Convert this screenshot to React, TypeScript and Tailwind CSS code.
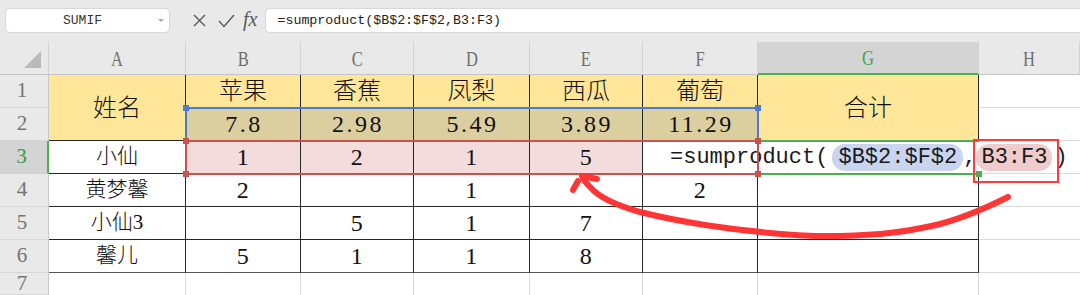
import React from 'react';

const COLS = 'grid-cols-[49px_137px_115px_113px_116px_113px_115px_221px_101px]';
const LINE = 'border-r border-b border-[#262626]';
const LIGHT = 'border-b border-[#dadada]';

type C = { t?: string; bg?: string; size?: string; span?: boolean };

const rows: C[][] = [
  [
    { t: '姓名', bg: 'bg-[#ffe699]', size: 'text-[24px] font-light', span: true },
    { t: '苹果', bg: 'bg-[#ffe699]', size: 'text-[24px] font-light' },
    { t: '香蕉', bg: 'bg-[#ffe699]', size: 'text-[24px] font-light' },
    { t: '凤梨', bg: 'bg-[#ffe699]', size: 'text-[24px] font-light' },
    { t: '西瓜', bg: 'bg-[#ffe699]', size: 'text-[24px] font-light' },
    { t: '葡萄', bg: 'bg-[#ffe699]', size: 'text-[24px] font-light' },
    { t: '合计', bg: 'bg-[#ffe699]', size: 'text-[24px] font-light', span: true },
  ],
  [
    { t: '7.8', bg: 'bg-[#dccf9f]' },
    { t: '2.98', bg: 'bg-[#dccf9f]' },
    { t: '5.49', bg: 'bg-[#dccf9f]' },
    { t: '3.89', bg: 'bg-[#dccf9f]' },
    { t: '11.29', bg: 'bg-[#dccf9f]' },
  ],
  [
    { t: '小仙', size: 'text-[21px] font-light' },
    { t: '1', bg: 'bg-[#f5dcdc]' },
    { t: '2', bg: 'bg-[#f5dcdc]' },
    { t: '1', bg: 'bg-[#f5dcdc]' },
    { t: '5', bg: 'bg-[#f5dcdc]' },
    {},
    {},
  ],
  [{ t: '黄梦馨', size: 'text-[21px] font-light' }, { t: '2' }, {}, { t: '1' }, {}, { t: '2' }, {}],
  [{ t: '小仙3', size: 'text-[21px] font-light' }, {}, { t: '5' }, { t: '1' }, { t: '7' }, {}, {}],
  [{ t: '馨儿', size: 'text-[21px] font-light' }, { t: '5' }, { t: '1' }, { t: '1' }, { t: '8' }, {}, {}],
];

function RowHead({ n, active }: { n: number; active?: boolean }) {
  return (
    <div
      className={`flex items-center justify-center pr-[4px] text-[21px] border-b ${
        active
          ? 'bg-[#d4d4d4] text-[#3a9c45] border-r-2 border-r-[#4caf50] border-b-[#cdcdcd]'
          : 'bg-[#e9e9e9] text-[#747474] border-r border-r-[#c8c8c8] border-b-[#d6d6d6]'
      }`}
    >
      {n}
    </div>
  );
}

function ColHead({ l, active }: { l: string; active?: boolean }) {
  return (
    <div
      className={`flex items-center justify-center text-[22px] border-r border-r-[#d2d2d2] ${
        active ? 'bg-[#d4d4d4] text-[#43a34c] border-b-2 border-b-[#4caf50]' : 'bg-[#e9e9e9] text-[#6e6e6e] border-b border-b-[#c4c4c4]'
      }`}
    >
      <span className="inline-block scale-x-75">{l}</span>
    </div>
  );
}

export default function App() {
  return (
    <div className="relative w-[1080px] h-[295px] overflow-hidden bg-white font-['Liberation_Serif','Noto_Sans_CJK_SC',serif] text-[#111]">
      {/* formula bar */}
      <div className="h-[42px] bg-[#e9e9e9] flex items-start pt-[8px]">
        <div className="ml-[5px] w-[165px] h-[25px] bg-white rounded-[5px] border border-[#d8d8d8] flex items-center">
          <span className="flex-1 text-center pl-[2px] font-['Liberation_Mono',monospace] text-[13px] text-[#333]">SUMIF</span>
          <svg width="8" height="5" className="mr-[4px]">
            <path d="M1 1 L4 4 L7 1 Z" fill="#a8a8a8" />
          </svg>
        </div>
        <div className="flex items-center h-[25px] ml-[23px] gap-[12px] text-[#5a5a5a]">
          <svg width="13" height="13" viewBox="0 0 13 13">
            <path d="M1 1 L12 12 M12 1 L1 12" stroke="#5a5a5a" strokeWidth="1.4" />
          </svg>
          <svg width="17" height="14" viewBox="0 0 17 14">
            <path d="M1 7 L6 12.5 L16 1" stroke="#5a5a5a" strokeWidth="1.4" fill="none" />
          </svg>
          <span className="italic text-[20px] leading-none -mt-[3px] -ml-[4px]">fx</span>
        </div>
        <div className="ml-[8px] flex-1 h-[25px] bg-white border-y border-l border-[#d8d8d8] rounded-l-[5px] flex items-center pl-[11px]">
          <span className="font-['Liberation_Mono',monospace] text-[13.3px] text-[#222]">=sumproduct($B$2:$F$2,B3:F3)</span>
        </div>
      </div>

      {/* sheet */}
      <div className={`grid ${COLS} grid-rows-[33px_repeat(6,33px)_22px]`}>
        <div className="relative bg-[#e9e9e9] border-r border-r-[#d2d2d2] border-b border-b-[#c4c4c4]">
          <svg width="18" height="18" className="absolute left-[24px] top-[9px]">
            <path d="M17 0 L17 17 L0 17 Z" fill="#bababa" />
          </svg>
        </div>
        {['A', 'B', 'C', 'D', 'E', 'F', 'G', 'H'].map((l) => (
          <ColHead key={l} l={l} active={l === 'G'} />
        ))}

        {rows.map((r, i) => (
          <React.Fragment key={i}>
            <RowHead n={i + 1} active={i === 2} />
            {r.map((c, j) => (
              <div
                key={j}
                className={`flex items-center justify-center ${LINE} ${c.bg ?? 'bg-white'} ${c.span ? 'row-span-2' : ''} ${
                  c.size ?? 'text-[24px] tracking-[2.5px] pl-[2px]'
                } ${i === 5 ? 'border-b-[#555]' : ''}`}
              >
                {c.t}
              </div>
            ))}
            <div className={LIGHT} />
          </React.Fragment>
        ))}

        <RowHead n={7} />
        {[0, 1, 2, 3, 4, 5, 6].map((k) => (
          <div key={k} className="border-r border-[#dadada]" />
        ))}
        <div />
      </div>

      {/* in-cell editor */}
      <div className="absolute left-[644px] top-[142px] w-[432px] h-[31px] bg-white flex items-center pl-[26px] font-['Liberation_Mono',monospace] text-[22px] text-[#1a1a1a] whitespace-nowrap">
        <span>=sumproduct(</span>
        <span className="ml-[4px] px-[6px] h-[27px] flex items-center rounded-[13px] bg-[#c9d5ef]">$B$2:$F$2</span>
        <span>,</span>
        <span className="px-[5px] h-[27px] flex items-center rounded-[13px] bg-[#efcbcb]">B3:F3</span>
        <span className="ml-[2px]">)</span>
      </div>

      {/* selections */}
      <div className="absolute left-[185px] top-[107px] w-[574px] h-[35px] border-2 border-[#4d7bd3]" />
      <div className="absolute left-[185px] top-[140px] w-[574px] h-[35px] border-2 border-[#c9514e]" />
      <div className="absolute left-[759px] top-[140px] w-[220px] h-[35px] border-y-2 border-[#4caf50]" />
      <div className="absolute left-[183px] top-[105px] w-[6px] h-[6px] bg-[#4d7bd3]" />
      <div className="absolute left-[755px] top-[105px] w-[6px] h-[6px] bg-[#4d7bd3]" />
      <div className="absolute left-[183px] top-[138px] w-[6px] h-[6px] bg-[#c9514e]" />
      <div className="absolute left-[755px] top-[138px] w-[6px] h-[6px] bg-[#c9514e]" />
      <div className="absolute left-[183px] top-[171px] w-[6px] h-[6px] bg-[#c9514e]" />
      <div className="absolute left-[755px] top-[171px] w-[6px] h-[6px] bg-[#c9514e]" />
      <div className="absolute left-[976px] top-[171px] w-[6px] h-[6px] bg-[#4caf50]" />

      {/* annotation */}
      <div className="absolute left-[973px] top-[139px] w-[86px] h-[44px] border-2 border-[#ff3a3a]" />
      <svg className="absolute left-0 top-0 pointer-events-none" width="1080" height="295">
        <g stroke="#ff3535" strokeWidth="6" strokeLinecap="round" strokeLinejoin="round" fill="none">
          <path d="M1008 197 C990 206 965 218 936 225 C905 232 880 235 840 236 C800 237 760 233 705 225 C680 221 660 217 640 212 C615 205 600 198 591 188 C586 183 583 180 582 176 L597 179" />
          <path d="M578 181 L573 190" />
        </g>
      </svg>
    </div>
  );
}
